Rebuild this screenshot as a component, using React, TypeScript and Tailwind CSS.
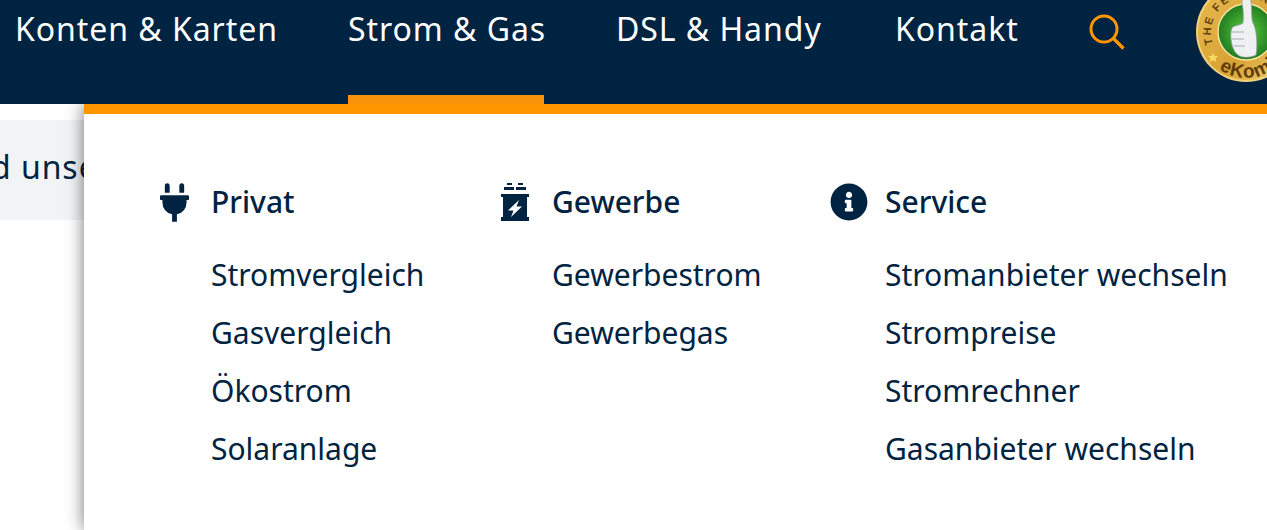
import React from "react";
import { FaInfoCircle, FaPlug } from "react-icons/fa";

const navItems = [
  { label: "Konten & Karten", cls: "w-[261px]" },
  { label: "Strom & Gas", cls: "w-[196px]", active: true },
  { label: "DSL & Handy", cls: "w-[207px]" },
  { label: "Kontakt", cls: "w-[124px]" },
];

const SearchIcon = () => (
  <svg width="38" height="38" viewBox="0 0 38 38" fill="none" className="shrink-0">
    <circle cx="15" cy="15" r="13" stroke="#ff9600" strokeWidth="3" />
    <path d="M24.5 24.5L34.5 34.5" stroke="#ff9600" strokeWidth="3.4" />
  </svg>
);

const EkomiBadge = () => (
  <svg width="100" height="100" viewBox="0 0 100 100" className="absolute left-[1196px] top-[-18px]">
    <defs>
      <linearGradient id="gold" x1="0" y1="0" x2="1" y2="1">
        <stop offset="0" stopColor="#e9bb52" />
        <stop offset="0.6" stopColor="#d8a233" />
        <stop offset="1" stopColor="#f3d67a" />
      </linearGradient>
      <radialGradient id="green">
        <stop offset="0.4" stopColor="#45ad34" />
        <stop offset="1" stopColor="#1f7d1f" />
      </radialGradient>
      <path id="ringTop" d="M17 62A35 35 0 1 1 85 50" />
      <path id="ringBottom" d="M23 87A46 46 0 0 0 96 50" />
    </defs>
    <circle cx="50" cy="50" r="50" fill="#f0d27a" />
    <circle cx="50" cy="50" r="48" fill="url(#gold)" />
    <circle cx="50" cy="50" r="28" fill="url(#green)" stroke="#f5e3a0" strokeWidth="1.5" />
    <text fontSize="11" fontWeight="700" fill="#5f4310" fontFamily="Liberation Sans, sans-serif" letterSpacing="2">
      <textPath href="#ringTop">THE FEEDBACK</textPath>
    </text>
    <text fontSize="19" fontWeight="700" fill="#5f3d0a" fontFamily="Liberation Sans, sans-serif" letterSpacing="1">
      <textPath href="#ringBottom">eKomi</textPath>
    </text>
    <path
      d="M47 41C48 33 47 26 46 20C46 15 55 15 55 20C56 28 55 36 57 41C60 46 62 60 60 73C54 76 46 76 42 73C36 69 33 54 36 46C38 43 43 44 47 41Z"
      fill="#eef0f1"
      stroke="#9a9fa0"
      strokeWidth="0.7"
    />
    <path d="M36 50H48M36 57H48M38 64H49" stroke="#a9adae" strokeWidth="1" />
    <path d="M17 71L18.5 74H22L19.5 76.5L20.5 80L17 78L13.5 80L14.5 76.5L12 74H15.5Z" fill="#f8dc5f" />
  </svg>
);

const GewerbeIcon = () => (
  <svg width="30" height="38" viewBox="0 0 30 38" className="shrink-0" fill="#002341">
    <rect x="7" y="0" width="5" height="2" />
    <rect x="18" y="0" width="5" height="2" />
    <rect x="4" y="4" width="10" height="3" />
    <rect x="16" y="4" width="10" height="3" />
    <path d="M1 11H29V14H27V34H29V38H1V34H3V14H1Z" />
    <path d="M19 17L8 27.5H13.5L11 34L22 23.5H16.5Z" fill="#fff" />
  </svg>
);

const columns = [
  {
    title: "Privat",
    icon: <FaPlug className="w-[29px] h-[39px] ml-[1px] text-[#002341]" />,
    cls: "w-[341px]",
    links: ["Stromvergleich", "Gasvergleich", "Ökostrom", "Solaranlage"],
  },
  {
    title: "Gewerbe",
    icon: <GewerbeIcon />,
    cls: "w-[333px]",
    links: ["Gewerbestrom", "Gewerbegas"],
  },
  {
    title: "Service",
    icon: <FaInfoCircle className="w-[38px] h-[38px] ml-[-3px] text-[#002341]" />,
    cls: "w-[400px]",
    links: ["Stromanbieter wechseln", "Strompreise", "Stromrechner", "Gasanbieter wechseln"],
  },
];

export default function App() {
  return (
    <div className="relative w-[1267px] h-[530px] overflow-hidden bg-white font-['Noto_Sans',sans-serif]">
      {/* Top nav */}
      <div className="relative z-10 h-[104px] bg-[#002341] flex items-start pl-[15px] text-white">
        {navItems.map((item) => (
          <div
            key={item.label}
            className={`${item.cls} relative shrink-0 mr-[72px] h-[104px] pt-[8px] text-[32px] leading-[42px] whitespace-nowrap tracking-[0.95px]`}
          >
            {item.label}
            {item.active && <div className="absolute left-0 right-0 bottom-0 h-[9px] bg-[#f8930b]" />}
          </div>
        ))}
        <div className="ml-[-2px] mt-[14px]">
          <SearchIcon />
        </div>
        <EkomiBadge />
      </div>

      {/* Page behind the menu */}
      <div className="mt-[16px] h-[100px] bg-[#f2f3f5] overflow-hidden">
        <div className="ml-[-9px] pt-[26px] text-[32px] leading-[42px] tracking-[0.95px] text-[#002341] whitespace-nowrap">
          d unser Angebot
        </div>
      </div>

      {/* Dropdown panel */}
      <div className="absolute left-[84px] right-0 top-[104px] bottom-0 bg-white border-t-[10px] border-[#ff9600] shadow-[0_0_16px_rgba(0,0,0,0.55)] text-[#002341] pl-[75px] pt-[64px] flex">
        {columns.map((col) => (
          <div key={col.title} className={`${col.cls} shrink-0`}>
            <div className="flex items-center h-[48px]">
              <div className="w-[52px] shrink-0 flex">{col.icon}</div>
              <div className="text-[30px] leading-[48px] font-medium whitespace-nowrap">{col.title}</div>
            </div>
            <div className="pl-[52px] mt-[28px] flex flex-col gap-[16px]">
              {col.links.map((link) => (
                <div key={link} className="text-[30px] leading-[42px] whitespace-nowrap">
                  {link}
                </div>
              ))}
            </div>
          </div>
        ))}
      </div>
    </div>
  );
}
